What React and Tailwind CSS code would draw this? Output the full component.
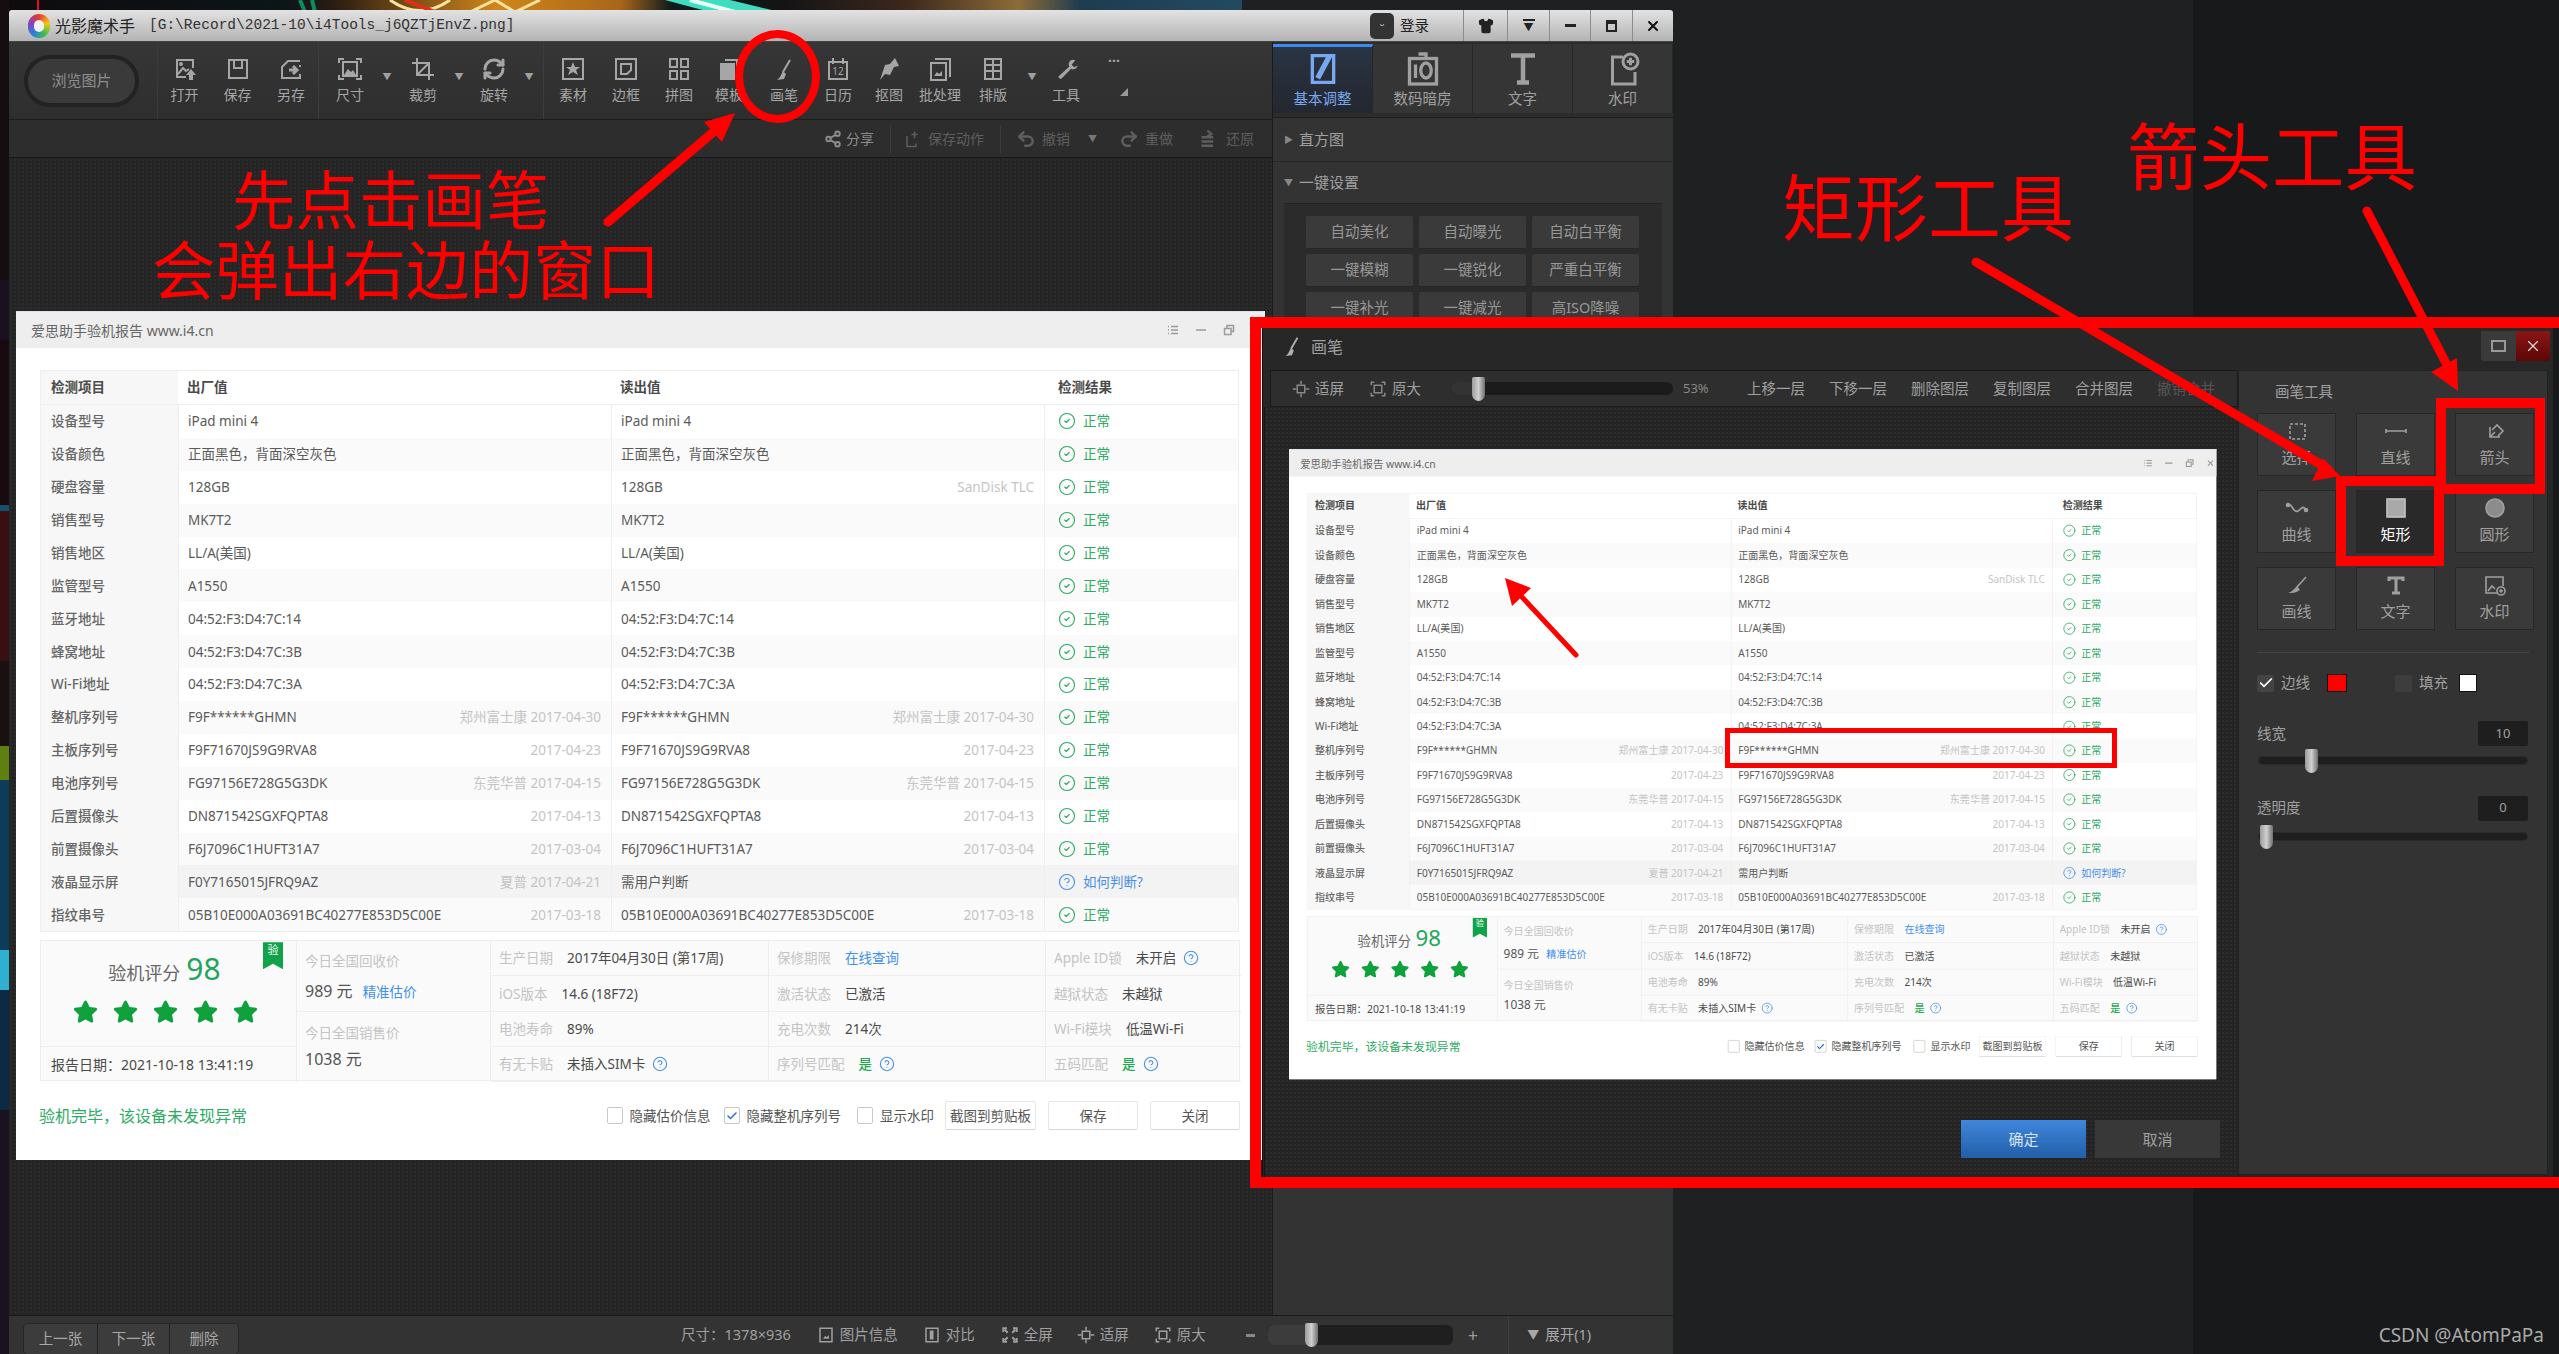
import React from 'react';
import { CircleCheck, CircleHelp, RefreshCw, Share2, Undo2, Redo2, Check, X, Shirt } from 'lucide-react';
import { FaStar } from 'react-icons/fa';

const Svg = ({ children, className = 'w-6 h-6', sw = 2 }) => (
  <svg viewBox="0 0 24 24" fill="none" stroke="currentColor" strokeWidth={sw} className={className}>{children}</svg>
);

const toolIcons = {
  open: <><path d="M20 11V3H4v17h9" /><path d="M5 17l5-6 3 3 3-2" /><circle cx="8" cy="7" r="1" fill="currentColor" /><path d="M18 12l5 6h-3v5h-4v-5h-3z" fill="currentColor" stroke="none" /></>,
  save: <><rect x="3" y="3" width="18" height="18" /><path d="M8 3v8h8V3" /></>,
  saveas: <><path d="M21 4H9L3 10v11h18v-4" /><path d="M21 8v2" /><path d="M10 13h7M14 9l4 4-4 4" strokeWidth="3" /></>,
  size: <><path d="M1 6V2h5M18 2h5v4M23 18v4h-5M6 22H1v-4" /><rect x="5" y="5" width="14" height="14" /><path d="M6 18l4-6 3 3 2-2 3 5z" fill="currentColor" stroke="none" /></>,
  crop: <><path d="M6 1v17h17" /><path d="M1 6h17v17" /><path d="M7 17L18 6" /></>,
  rotate: null,
  material: <><rect x="2" y="2" width="20" height="20" /><path d="M12 5l2 5h5l-4 3 2 5-5-3-5 3 2-5-4-3h5z" fill="currentColor" stroke="none" /></>,
  border: <><rect x="2" y="2" width="20" height="20" /><path d="M7 7h10v6l-4 4H7z" /></>,
  collage: <><rect x="3" y="2" width="7" height="8" /><rect x="14" y="2" width="7" height="8" /><rect x="3" y="14" width="7" height="8" /><rect x="14" y="14" width="7" height="8" /></>,
  template: <><path d="M8 3h12v15" /><rect x="4" y="7" width="13" height="15" fill="currentColor" /></>,
  brush: <><path d="M18 3l-7 12" /><path d="M11 14l3 3-2 5-7 1c3-2 4-5 6-9z" fill="currentColor" stroke="none" /></>,
  calendar: <><path d="M3 5h18v17H3zM7 1v6M17 1v6" /><text x="12" y="18" fontSize="10" textAnchor="middle" fill="currentColor" stroke="none">12</text></>,
  cutout: <path d="M18 1l4 8-5 1-4 8-5-1-5 6 3-9 2-6 5-1z" fill="currentColor" stroke="none" />,
  batch: <><path d="M7 2h15v18" /><rect x="3" y="6" width="15" height="17" /><path d="M6 19l3-4 2 2 3-3v5z" fill="currentColor" stroke="none" /></>,
  layout: <><rect x="4" y="2" width="16" height="20" /><path d="M4 8h16M4 14h16M12 2v20" /></>,
  wrench: <path d="M20 2c-3-1-6 1-6 4 0 1 0 2 1 3L6 20c-1 2 1 3 3 2l8-11c3 1 6-1 6-4l-3 2-3-2z" fill="currentColor" stroke="none" transform="rotate(8 12 12)" />,
};

const tools = [
  { t: '打开', i: 'open', w: 53 }, { t: '保存', i: 'save', w: 53 }, { t: '另存', i: 'saveas', w: 54, end: true },
  { t: '尺寸', i: 'size', w: 62, caret: true }, { t: '裁剪', i: 'crop', w: 60, caret: true }, { t: '旋转', i: 'rotate', w: 58, caret: true, pad: 8, end: true },
  { t: '素材', i: 'material', w: 58 }, { t: '边框', i: 'border', w: 48 }, { t: '拼图', i: 'collage', w: 58 }, { t: '模板', i: 'template', w: 42 },
  { t: '画笔', i: 'brush', w: 68 }, { t: '日历', i: 'calendar', w: 40 }, { t: '抠图', i: 'cutout', w: 62 }, { t: '批处理', i: 'batch', w: 40 },
  { t: '排版', i: 'layout', w: 66, caret: true }, { t: '工具', i: 'wrench', w: 56 },
];

function Toolbar() {
  return (
    <div className="h-[78px] flex bg-gradient-to-b from-[#363636] to-[#2e2e2e] border-b border-[#1c1c1c]">
      <div className="w-[149px] flex items-center pl-[15px] border-r border-[#3a3a3a]">
        <div className="w-[115px] h-[52px] rounded-[26px] border-[4px] border-[#222] bg-[#3a3a3a] flex items-center justify-center text-[#8f8f8f] text-[15px]">浏览图片</div>
      </div>
      {tools.map((x) => (
        <React.Fragment key={x.t}>
          <div className="flex flex-col items-center pt-[15px] text-[#a6a6a6] shrink-0" style={{ width: x.w }}>
            {x.i === 'rotate' ? <RefreshCw className="w-6 h-6" strokeWidth={3} /> : <Svg>{toolIcons[x.i]}</Svg>}
            <span className="text-[14px] leading-[20px] mt-[4px] whitespace-nowrap">{x.t}</span>
          </div>
          {x.caret && <div className="w-3 flex items-center pb-[8px] justify-center text-[#a0a0a0] text-[9px] shrink-0">▼</div>}
          {x.pad && <div className="w-2 shrink-0" />}
          {x.end && <div className="w-px bg-[#3d3d3d] shrink-0" />}
        </React.Fragment>
      ))}
      <div className="w-[40px] relative text-[#a6a6a6] text-center shrink-0 pt-[12px] font-bold text-[14px] leading-[14px]">
        ···
        <span className="absolute left-[26px] top-[46px] border-l-[8px] border-l-transparent border-b-[8px] border-b-[#999]" />
      </div>
    </div>
  );
}

function SubBar() {
  const dim = 'text-[14px] text-[#5e5e5e]';
  return (
    <div className="h-[38px] flex items-center justify-end pr-[18px] bg-[#2d2d2d] border-b border-[#1a1a1a]">
      <div className="flex items-center text-[14px] text-[#8c8c8c] pr-[16px] border-r border-[#3a3a3a] h-[28px]">
        <Share2 className="w-[18px] h-[18px] mr-[4px]" strokeWidth={2.5} /><span>分享</span>
      </div>
      <div className={`flex items-center ${dim} pl-[13px] pr-[16px] border-r border-[#3a3a3a] h-[28px]`}>
        <Svg className="w-[18px] h-[18px] mr-[6px]"><path d="M4 8v14h12V18M14 2v9M10 6h8" /></Svg><span>保存动作</span>
      </div>
      <div className={`flex items-center ${dim} pl-[15px]`}>
        <Undo2 className="w-5 h-5 mr-[6px]" strokeWidth={3} /><span>撤销</span>
        <span className="text-[9px] ml-[18px] mr-[22px] text-[#777]">▼</span>
        <Redo2 className="w-5 h-5 mr-[6px]" strokeWidth={3} /><span>重做</span>
        <Svg className="w-5 h-5 ml-[26px] mr-[7px]"><path d="M3 10h14M3 15h14M3 20h14" strokeWidth="3" /><path d="M10 2l5 4-5 3" strokeWidth="2.5" /></Svg><span>还原</span>
      </div>
    </div>
  );
}

const rows = [
  ['设备型号', 'iPad mini 4', '', 'iPad mini 4', ''],
  ['设备颜色', '正面黑色，背面深空灰色', '', '正面黑色，背面深空灰色', ''],
  ['硬盘容量', '128GB', '', '128GB', 'SanDisk TLC'],
  ['销售型号', 'MK7T2', '', 'MK7T2', ''],
  ['销售地区', 'LL/A(美国)', '', 'LL/A(美国)', ''],
  ['监管型号', 'A1550', '', 'A1550', ''],
  ['蓝牙地址', '04:52:F3:D4:7C:14', '', '04:52:F3:D4:7C:14', ''],
  ['蜂窝地址', '04:52:F3:D4:7C:3B', '', '04:52:F3:D4:7C:3B', ''],
  ['Wi-Fi地址', '04:52:F3:D4:7C:3A', '', '04:52:F3:D4:7C:3A', ''],
  ['整机序列号', 'F9F******GHMN', '郑州富士康 2017-04-30', 'F9F******GHMN', '郑州富士康 2017-04-30'],
  ['主板序列号', 'F9F71670JS9G9RVA8', '2017-04-23', 'F9F71670JS9G9RVA8', '2017-04-23'],
  ['电池序列号', 'FG97156E728G5G3DK', '东莞华普 2017-04-15', 'FG97156E728G5G3DK', '东莞华普 2017-04-15'],
  ['后置摄像头', 'DN871542SGXFQPTA8', '2017-04-13', 'DN871542SGXFQPTA8', '2017-04-13'],
  ['前置摄像头', 'F6J7096C1HUFT31A7', '2017-03-04', 'F6J7096C1HUFT31A7', '2017-03-04'],
  ['液晶显示屏', 'F0Y7165015JFRQ9AZ', '夏普 2017-04-21', '需用户判断', ''],
  ['指纹串号', '05B10E000A03691BC40277E853D5C00E', '2017-03-18', '05B10E000A03691BC40277E853D5C00E', '2017-03-18'],
];

const cols = 'grid grid-cols-[137px_433px_433px_196px]';

const Val = ({ v, s }) => (
  <div className="flex items-center justify-between pl-[9px] pr-[10px] border-l border-[#eeeeee] min-w-0">
    <span className="whitespace-nowrap">{v}</span>
    {s && <span className="text-[#c4c4c4] whitespace-nowrap">{s}</span>}
  </div>
);

const Info = ({ l, v, help, blue, green }) => (
  <div className="flex items-center pl-[8px] border-l border-b border-[#eeeeee] whitespace-nowrap">
    <span className="text-[#c4c4c4] mr-[14px]">{l}</span>
    {v && <span className={blue ? 'text-[#3f8ff0]' : green ? 'text-[#1faa50] font-medium' : 'text-[#4a4a4a]'}>{v}</span>}
    {help && <CircleHelp className="w-4 h-4 ml-[7px] text-[#4a90e8]" strokeWidth={1.6} />}
  </div>
);

const Check2 = ({ on, children }) => (
  <div className="flex items-center gap-[7px] text-[#555] whitespace-nowrap">
    <span className="w-[16px] h-[17px] border border-[#c8c8c8] rounded-[2px] bg-white flex items-center justify-center">
      {on && <Check className="w-3 h-3 text-[#2a6fd6]" strokeWidth={3} />}
    </span>
    {children}
  </div>
);

const Btn = ({ children, w = 'w-[90px]' }) => (
  <div className={`${w} h-[29px] border border-[#e6e6e6] border-b-[#d5d5d5] rounded-[2px] bg-white flex items-center justify-center text-[#555]`}>{children}</div>
);

function Report({ className }) {
  return (
    <div className={`w-[1249px] h-[849px] bg-white text-[13.5px] text-[#5a5a5a] ${className}`}>
      <div className="h-[37px] bg-[#eeeeee] border-t border-[#d7e3ee] flex items-center pl-[15px] text-[14px] text-[#666]">
        <span>爱思助手验机报告 www.i4.cn</span>
        <div className="ml-auto flex items-center gap-[16px] pr-[2px] text-[#9a9a9a]">
          <Svg className="w-3 h-3"><path d="M8 5h14M8 12h14M8 19h14M2 5h2M2 12h2M2 19h2" strokeWidth="3" /></Svg>
          <Svg className="w-3 h-3"><path d="M2 12h20" strokeWidth="3" /></Svg>
          <Svg className="w-3 h-3" sw="3"><path d="M8 8V3h13v12h-5" /><rect x="3" y="9" width="13" height="12" /></Svg>
          <X className="w-3 h-3" strokeWidth={3} />
        </div>
      </div>
      <div className="mt-[22px] mx-[24px] w-[1199px] border border-[#eeeeee]">
        <div className={`${cols} h-[34px] font-bold text-[#4a4a4a] border-b border-[#eeeeee]`}>
          <div className="bg-[#f7f7f7] pl-[10px] flex items-center">检测项目</div>
          <div className="pl-[9px] flex items-center">出厂值</div>
          <div className="pl-[9px] flex items-center">读出值</div>
          <div className="pl-[14px] flex items-center">检测结果</div>
        </div>
        {rows.map((r, i) => {
          const how = r[0] === '液晶显示屏';
          return (
            <div key={r[0]} className={`${cols} h-[32.9px] ${how ? 'bg-[#f3f3f3]' : i % 2 ? 'bg-[#fafafa]' : 'bg-white'}`}>
              <div className="bg-[#f7f7f7] pl-[10px] flex items-center font-medium text-[#666]">{r[0]}</div>
              <Val v={r[1]} s={r[2]} />
              <Val v={r[3]} s={r[4]} />
              <div className={`flex items-center pl-[13px] border-l border-[#eeeeee] gap-[7px] ${how ? 'text-[#4a90e8]' : 'text-[#2cab62]'}`}>
                {how ? <CircleHelp className="w-[18px] h-[18px]" strokeWidth={1.5} /> : <CircleCheck className="w-[18px] h-[18px]" strokeWidth={1.5} />}
                <span>{how ? '如何判断?' : '正常'}</span>
              </div>
            </div>
          );
        })}
      </div>
      <div className="mt-[8px] mx-[24px] w-[1200px] h-[141px] border border-[#eeeeee] bg-[#fafafa] grid grid-cols-[255px_194px_278px_277px_196px] grid-rows-[35px_36px_35px_35px]">
        <div className="row-span-3 relative border-b border-[#eeeeee] flex flex-col items-center">
          <div className="flex items-baseline gap-[6px] mt-[9px] mr-[8px] text-[18px] text-[#666]">验机评分<span className="text-[30px] leading-[38px] text-[#22a55a]">98</span></div>
          <div className="flex gap-[15px] mt-[11px] mr-[6px] text-[#0ea13c]">
            {[1, 2, 3, 4, 5].map((n) => <FaStar key={n} className="w-[25px] h-[25px]" />)}
          </div>
          <div className="absolute right-[13px] top-[1px] w-[20px] h-[27px] bg-[#10a34a] text-white text-[11px] text-center [clip-path:polygon(0_0,100%_0,100%_100%,50%_80%,0_100%)]">验</div>
        </div>
        <div className="row-span-2 border-l border-b border-[#eeeeee] pl-[8px] pt-[10px]">
          <div className="text-[#c4c4c4]">今日全国回收价</div>
          <div className="mt-[7px] text-[16px] text-[#555]">989 元<span className="ml-[10px] text-[13.5px] text-[#3f8ff0]">精准估价</span></div>
        </div>
        <Info l="生产日期" v="2017年04月30日 (第17周)" />
        <Info l="保修期限" v="在线查询" blue />
        <Info l="Apple ID锁" v="未开启" help />
        <Info l="iOS版本" v="14.6 (18F72)" />
        <Info l="激活状态" v="已激活" />
        <Info l="越狱状态" v="未越狱" />
        <div className="row-span-2 border-l border-[#eeeeee] pl-[8px] pt-[11px]">
          <div className="text-[#c4c4c4]">今日全国销售价</div>
          <div className="mt-[3px] text-[16px] text-[#555]">1038 元</div>
        </div>
        <Info l="电池寿命" v="89%" />
        <Info l="充电次数" v="214次" />
        <Info l="Wi-Fi模块" v="低温Wi-Fi" />
        <div className="flex items-center pl-[10px] text-[14px] text-[#4a4a4a] whitespace-nowrap">报告日期：2021-10-18 13:41:19</div>
        <Info l="有无卡贴" v="未插入SIM卡" help />
        <Info l="序列号匹配" v="是" green help />
        <Info l="五码匹配" v="是" green help />
      </div>
      <div className="mt-[20px] mx-[23px] w-[1201px] flex items-center">
        <span className="text-[16px] text-[#2cab62]">验机完毕，该设备未发现异常</span>
        <div className="ml-auto flex items-center">
          <Check2>隐藏估价信息</Check2>
          <div className="w-[13px]" />
          <Check2 on>隐藏整机序列号</Check2>
          <div className="w-[16px]" />
          <Check2>显示水印</Check2>
          <div className="w-[11px]" />
          <Btn w="w-[91px]">截图到剪贴板</Btn>
          <div className="w-[12px]" />
          <Btn>保存</Btn>
          <div className="w-[12px]" />
          <Btn>关闭</Btn>
        </div>
      </div>
    </div>
  );
}

const Tab = ({ t, on, children }) => (
  <div className={`flex-1 flex flex-col items-center border-r border-[#262626] ${on ? 'pt-[4px] border-t-[3px] border-t-[#3d8bf0] bg-gradient-to-b from-[#2a3444] to-[#23272f] text-[#78a8f0]' : 'pt-[7px] bg-[#353535] text-[#a0a0a0]'}`}>
    <div className="h-[36px] flex items-center">{children}</div>
    <span className="text-[14.5px] leading-[20px] mt-[1px]">{t}</span>
  </div>
);

const presetRows = [['自动美化', '自动曝光', '自动白平衡'], ['一键模糊', '一键锐化', '严重白平衡'], ['一键补光', '一键减光', '高ISO降噪']];

function SidePanel() {
  return (
    <div className="w-[401px] shrink-0 flex flex-col bg-[#333333] border-l border-[#1a1a1a]">
      <div className="h-[76px] flex bg-[#2c2c2c] border-b border-[#1e1e1e] pt-[2px] pb-[4px]">
        <Tab t="基本调整" on>
          <Svg className="w-8 h-9" sw="2.5"><path d="M4 2h16v20H4z" /><path d="M17 2l-9 17" strokeWidth="4" /></Svg>
        </Tab>
        <Tab t="数码暗房">
          <Svg className="w-9 h-9" sw="2.2"><rect x="3" y="5" width="18" height="17" /><path d="M9 2h5v3" /><path d="M7 9v9" /><ellipse cx="14" cy="13" rx="3.5" ry="5" /></Svg>
        </Tab>
        <Tab t="文字">
          <Svg className="w-9 h-9" sw="3"><path d="M4 3h16M12 3v18M8 21h8" /></Svg>
        </Tab>
        <Tab t="水印">
          <Svg className="w-9 h-9" sw="2"><path d="M12 4H5v18h15v-8" /><circle cx="17" cy="7" r="5" /><path d="M17 4.5v5M14.5 7h5" /></Svg>
        </Tab>
      </div>
      <div className="h-[44px] flex items-center pl-[11px] text-[15px] text-[#a0a0a0] border-b border-[#262626]">
        <span className="text-[9px] mr-[6px] text-[#888]">▶</span>直方图
      </div>
      <div className="h-[41px] flex items-center pl-[11px] text-[15px] text-[#a0a0a0]">
        <span className="text-[9px] mr-[6px] text-[#888]">▼</span>一键设置
      </div>
      <div className="mx-[11px] w-[378px] bg-[#2b2b2b] border-t border-[#222] pt-[12px] px-[22px] pb-[6px] flex flex-col gap-[5px]">
        {presetRows.map((r) => (
          <div key={r[0]} className="flex gap-[6px]">
            {r.map((t) => (
              <div key={t} className="w-[107px] h-[33px] bg-[#3a3a3a] rounded-[2px] border-b border-[#262626] flex items-center justify-center text-[14.5px] text-[#989898]">{t}</div>
            ))}
          </div>
        ))}
      </div>
    </div>
  );
}

const Thumb = ({ className = '' }) => (
  <span className={`absolute top-1/2 -translate-y-1/2 w-[13px] h-[24px] rounded-b-[7px] rounded-t-[2px] bg-gradient-to-r from-[#9c9c9c] via-[#d0d0d0] to-[#707070] ${className}`} />
);

function BottomBar() {
  const it = 'flex items-center gap-[5px] text-[14.5px] text-[#a0a0a0] whitespace-nowrap';
  return (
    <div className="h-[39px] flex items-center bg-[#333333] border-t border-[#1a1a1a] pl-[14px]">
      <div className="flex h-[32px] mt-[7px] rounded-[5px] bg-[#3c3c3c] border border-[#252525] text-[14.5px] text-[#a8a8a8] divide-x divide-[#222]">
        <span className="w-[74px] flex items-center justify-center">上一张</span>
        <span className="w-[72px] flex items-center justify-center">下一张</span>
        <span className="w-[68px] flex items-center justify-center">删除</span>
      </div>
      <span className={`${it} ml-[442px]`}>尺寸：1378×936</span>
      <span className={`${it} ml-[26px]`}><Svg className="w-[18px] h-[18px]"><rect x="4" y="3" width="16" height="18" /><path d="M8 17l3-4 2 2 3-3v5z" fill="currentColor" stroke="none" /></Svg>图片信息</span>
      <span className={`${it} ml-[25px]`}><Svg className="w-[18px] h-[18px]"><rect x="4" y="3" width="16" height="18" /><rect x="9" y="6" width="5" height="12" fill="currentColor" stroke="none" /></Svg>对比</span>
      <span className={`${it} ml-[26px]`}><Svg className="w-[18px] h-[18px]" sw="2.5"><path d="M3 8V3h5M16 3h5v5M21 16v5h-5M8 21H3v-5M9 9l-4-4M15 9l4-4M9 15l-4 4M15 15l4 4" /></Svg>全屏</span>
      <span className={`${it} ml-[24px]`}><Svg className="w-[18px] h-[18px]"><rect x="7" y="7" width="10" height="10" /><path d="M12 1v5M12 18v5M1 12h5M18 12h5" /></Svg>适屏</span>
      <span className={`${it} ml-[25px]`}><Svg className="w-[18px] h-[18px]"><path d="M3 7V3h4M17 3h4v4M21 17v4h-4M7 21H3v-4" /><rect x="7" y="7" width="10" height="10" /></Svg>原大</span>
      <span className="ml-[40px] w-[9px] h-[3px] bg-[#888]" />
      <div className="relative ml-[13px] w-[185px] h-[20px] rounded-[6px] bg-[#1f1f1f] shrink-0">
        <div className="w-[40px] h-full rounded-l-[6px] bg-[#3c3c3c]" />
        <Thumb className="left-[37px]" />
      </div>
      <span className="ml-[15px] text-[18px] leading-none text-[#999]">+</span>
      <div className="ml-[30px] h-full border-l border-[#3f3f3f] pl-[18px] w-[117px] flex items-center gap-[6px] text-[14.5px] text-[#a8a8a8]">
        <span className="text-[12px]">▼</span>展开(1)
      </div>
    </div>
  );
}

const canvasBg = 'bg-[#242424] bg-[radial-gradient(#2c2c2c_1px,transparent_1px)] bg-[length:4px_4px]';

const paintTools = [
  { t: '选择', i: <rect x="5" y="3" width="15" height="15" strokeDasharray="3 2" /> },
  { t: '直线', i: <path d="M2 10h20M2 8v4M22 8v4" /> },
  { t: '箭头', i: <><path d="M7 6v10h10M7 16l5-5M9 9l5-5 6 6-5 5" /></> },
  { t: '曲线', i: <><path d="M3 7c4-3 5 9 10 6s4-6 8-1" /><circle cx="3" cy="7" r="1.5" fill="currentColor" /><circle cx="21" cy="12" r="1.5" fill="currentColor" /></> },
  { t: '矩形', on: true, i: <rect x="3" y="1" width="18" height="18" fill="#a9a9a9" stroke="#c4c4c4" /> },
  { t: '圆形', i: <circle cx="12" cy="10" r="9" fill="#8c8c8c" stroke="#a0a0a0" /> },
  { t: '画线', i: <><path d="M21 2L12 12" /><path d="M12 11l3 4c-4 3-8 3-12 3 4-1 6-4 9-7z" fill="currentColor" stroke="none" /></> },
  { t: '文字', i: <path d="M5 6V3h14v3M12 3v15M8 18h8" strokeWidth="3" /> },
  { t: '水印', i: <><path d="M20 11V2H3v16h11" /><path d="M5 16l4-5 3 3" /><circle cx="18" cy="16" r="4" /><circle cx="18" cy="16" r="1" fill="currentColor" /></> },
];

const Slider = ({ left }) => (
  <div className="relative mx-[1px] h-[9px] rounded-[5px] bg-[#1e1e1e] border border-[#2a2a2a]">
    <Thumb className={left} />
  </div>
);

function PaintDialog() {
  const layer = 'whitespace-nowrap text-[14.5px] text-[#a0a0a0]';
  return (
    <div className="absolute left-[1262px] top-[327px] w-[1291px] h-[850px] bg-[#262626] border-t border-l border-[#111] flex flex-col">
      <div className="h-[42px] shrink-0 flex items-start pl-[18px] pt-[7px] text-[16px] text-[#a0a0a0] bg-[#272727] relative">
        <Svg className="w-[22px] h-[22px] text-[#b0b0b0]">{toolIcons.brush}</Svg>
        <span className="ml-[8px]">画笔</span>
        <div className="absolute right-[3px] top-[3px] flex">
          <div className="w-[35px] h-[30px] bg-[#3a3a3a] rounded-bl-[3px] flex items-center justify-center">
            <span className="w-[15px] h-[12px] border-[2px] border-[#999]" />
          </div>
          <div className="w-[34px] h-[30px] bg-gradient-to-b from-[#8c1515] to-[#5c0808] rounded-br-[3px] flex items-center justify-center text-[#e5e5e5]">
            <X className="w-[18px] h-[18px]" strokeWidth={1.5} />
          </div>
        </div>
      </div>
      <div className="flex-1 flex min-h-0">
        <div className="w-[975px] shrink-0 flex flex-col relative">
          <div className="h-[37px] ml-[7px] bg-[#2e2e2e] border border-[#1a1a1a] flex items-center text-[14.5px] text-[#a0a0a0] pl-[21px]">
            <span className="flex items-center gap-[5px] whitespace-nowrap"><Svg className="w-[18px] h-[18px] text-[#888]"><rect x="7" y="7" width="10" height="10" /><path d="M12 1v5M12 18v5M1 12h5M18 12h5" /></Svg>适屏</span>
            <span className="flex items-center gap-[5px] ml-[25px] whitespace-nowrap"><Svg className="w-[18px] h-[18px] text-[#888]"><path d="M3 7V3h4M17 3h4v4M21 17v4h-4M7 21H3v-4" /><rect x="7" y="7" width="10" height="10" /></Svg>原大</span>
            <div className="relative ml-[30px] w-[222px] h-[13px] rounded-[7px] bg-[#1b1b1b] shrink-0">
              <div className="w-[28px] h-full rounded-l-[7px] bg-[#333]" />
              <Thumb className="left-[21px]" />
            </div>
            <span className="ml-[10px] w-[64px] text-[13px] text-[#888]">53%</span>
            <span className={layer}>上移一层</span>
            <span className={`${layer} ml-[24px]`}>下移一层</span>
            <span className={`${layer} ml-[24px]`}>删除图层</span>
            <span className={`${layer} ml-[24px]`}>复制图层</span>
            <span className={`${layer} ml-[24px]`}>合并图层</span>
            <span className="ml-[24px] whitespace-nowrap text-[14.5px] text-[#555]">撤销合并</span>
          </div>
          <div className={`flex-1 ml-[1px] relative ${canvasBg} border-l border-[#151515]`}>
            <Report className="absolute left-[24px] top-[42px] origin-top-left scale-[0.7425]" />
            <div className="absolute left-[696px] top-[713px] flex gap-[9px] text-[15px]">
              <div className="w-[125px] h-[38px] bg-gradient-to-b from-[#3f87dd] to-[#225ea8] flex items-center justify-center text-[#d8e4f2]">确定</div>
              <div className="w-[125px] h-[38px] bg-[#383838] flex items-center justify-center text-[#a0a0a0]">取消</div>
            </div>
          </div>
        </div>
        <div className="w-[310px] mb-[2px] bg-[#333333] border border-[#222] px-[18px] text-[14.5px] text-[#a0a0a0]">
          <div className="h-[42px] flex items-center pl-[18px]">画笔工具</div>
          <div className="grid grid-cols-[79px_79px_79px] gap-x-[20px] gap-y-[14px]">
            {paintTools.map((x) => (
              <div key={x.t} className={`h-[63px] flex flex-col items-center pt-[7px] border border-[#272727] ${x.on ? 'bg-[#292929] text-white' : 'bg-[#3a3a3a]'}`}>
                <span className={x.on ? 'text-[#c4c4c4]' : 'text-[#a0a0a0]'}><Svg className="w-6 h-6" sw="1.6">{x.i}</Svg></span>
                <span className="text-[15px] leading-[20px] mt-[2px]">{x.t}</span>
              </div>
            ))}
          </div>
          <div className="mt-[22px] h-px bg-[#444]" />
          <div className="mt-[20px] h-[20px] flex items-center">
            <span className="w-[17px] h-[17px] bg-[#444] rounded-[2px] flex items-center justify-center text-white"><Check className="w-4 h-4" strokeWidth={2.5} /></span>
            <span className="ml-[7px] w-[46px]">边线</span>
            <span className="w-[20px] h-[18px] bg-[#ff0000] border border-[#111]" />
            <span className="ml-[48px] w-[17px] h-[17px] bg-[#3d3d3d] rounded-[2px]" />
            <span className="ml-[7px] w-[40px]">填充</span>
            <span className="w-[18px] h-[18px] bg-white border border-[#111]" />
          </div>
          <div className="mt-[28px] h-[25px] flex items-center justify-between">
            <span>线宽</span>
            <span className="w-[50px] h-[25px] mr-[1px] bg-[#1e1e1e] rounded-[2px] flex items-center justify-center text-[13px]">10</span>
          </div>
          <div className="mt-[10px]"><Slider left="left-[46px]" /></div>
          <div className="mt-[30px] h-[26px] flex items-center justify-between">
            <span>透明度</span>
            <span className="w-[50px] h-[25px] mr-[1px] bg-[#1e1e1e] rounded-[2px] flex items-center justify-center text-[13px]">0</span>
          </div>
          <div className="mt-[11px]"><Slider left="left-[1px]" /></div>
        </div>
      </div>
    </div>
  );
}

function Annotations() {
  const big = 'absolute leading-none text-[#ff0000] whitespace-nowrap';
  return (
    <>
      <div className="absolute left-[735px] top-[30px] w-[85px] h-[93px] rounded-[50%] border-[8px] border-[#ff0000]" />
      <div className={`${big} left-[232px] top-[168px] text-[63.5px]`}>先点击画笔</div>
      <div className={`${big} left-[152px] top-[238px] text-[63.5px]`}>会弹出右边的窗口</div>
      <div className={`${big} left-[1782px] top-[170px] text-[73px]`}>矩形工具</div>
      <div className={`${big} left-[2127px] top-[120px] text-[72.5px]`}>箭头工具</div>
      <div className="absolute left-[1250px] top-[317px] w-[1320px] h-[871px] border-[11px] border-[#ff0000]" />
      <div className="absolute left-[1725px] top-[728px] w-[392px] h-[40px] border-[5px] border-[#ff0000]" />
      <div className="absolute left-[2436px] top-[398px] w-[109px] h-[96px] border-[10px] border-[#ff0000]" />
      <div className="absolute left-[2336px] top-[476px] w-[108px] h-[90px] border-[10px] border-[#ff0000]" />
      <svg className="absolute inset-0 w-[2559px] h-[1354px] pointer-events-none" viewBox="0 0 2559 1354">
        <g stroke="#ff0000" strokeLinecap="round" fill="#ff0000">
          <path d="M608 222L718 128" strokeWidth="9" />
          <polygon points="735,113 704,122 722,142" stroke="none" />
          <path d="M1976 262L2325 467" strokeWidth="9" />
          <polygon points="2340,476 2323,458 2312,481" stroke="none" />
          <path d="M2367 211L2447 365" strokeWidth="9" />
          <polygon points="2458,391 2457,358 2431,372" stroke="none" />
          <path d="M1576 655L1521 596" strokeWidth="5" />
          <polygon points="1505,578 1531,588 1512,606" stroke="none" />
        </g>
      </svg>
    </>
  );
}

function Wallpaper() {
  return (
    <>
      <div className="absolute right-0 top-0 w-[366px] h-full bg-[#18191b]" />
      <svg className="absolute left-0 top-0 w-[1242px] h-[12px]" viewBox="0 0 1242 12" preserveAspectRatio="none">
        <defs>
          <linearGradient id="wall" x1="0" x2="1" y1="0" y2="0">
            <stop offset="0" stopColor="#0f0b0d" />
            <stop offset="0.23" stopColor="#0b1518" />
            <stop offset="0.27" stopColor="#2a1d12" />
            <stop offset="0.4" stopColor="#d0861a" />
            <stop offset="0.5" stopColor="#a8661a" />
            <stop offset="0.54" stopColor="#101c1c" />
            <stop offset="0.63" stopColor="#141414" />
            <stop offset="0.73" stopColor="#3c281c" />
            <stop offset="0.82" stopColor="#8c6c38" />
            <stop offset="0.87" stopColor="#1e3c50" />
            <stop offset="1" stopColor="#234a60" />
          </linearGradient>
        </defs>
        <rect width="1242" height="12" fill="url(#wall)" />
        <path d="M38 0v12" stroke="#e01020" strokeWidth="2" />
        <path d="M300 0l5 12M312 0l3 12" stroke="#0fa" strokeWidth="4" opacity="0.5" />
        <path d="M390 0c20 14 40 14 60 0M470 12l25-12 20 12 25-12" stroke="#fde2a0" strokeWidth="3" fill="none" />
        <path d="M405 0l30 12" stroke="#e23018" strokeWidth="4" />
        <path d="M665 0l45 12h70L730 0z" fill="#3fdcc0" />
        <path d="M690 0l45 12" stroke="#e8fff8" strokeWidth="4" />
      </svg>
      <div className="absolute left-0 top-0 w-[9px] h-full flex flex-col">
        <div className="h-[280px] bg-[#160d10]" />
        <div className="h-[60px] bg-[#1a1020]" />
        <div className="h-[165px] bg-[#180a0e]" />
        <div className="h-[6px] bg-[#14506e]" />
        <div className="h-[150px] bg-[#3a0f12]" />
        <div className="h-[85px] bg-[#1b1010]" />
        <div className="h-[34px] bg-[#5f7f12]" />
        <div className="h-[170px] bg-[#0c3c58]" />
        <div className="h-[40px] bg-[#2fb0d0]" />
        <div className="h-[120px] bg-[#0c2a44]" />
        <div className="flex-1 bg-[#1a1220]" />
      </div>
    </>
  );
}

export default function App() {
  return (
    <div className="relative w-[2559px] h-[1354px] overflow-hidden bg-[#1e2022] font-['Noto_Sans','Noto_Sans_CJK_SC',sans-serif]">
      <Wallpaper />
      {/* main window */}
      <div className="absolute left-[9px] top-[10px] w-[1664px] h-[1344px] flex flex-col">
        <div className="h-[32px] shrink-0 flex items-center bg-gradient-to-b from-[#e2e2e2] to-[#b4b4b4] border-b border-[#444] rounded-t-[3px]">
          <div className="ml-[19px] w-[22px] h-[24px] rounded-full flex items-center justify-center bg-[conic-gradient(#e53b2c,#f5c518,#3fbf4a,#2a7fe0,#8a3fc0,#e53b2c)]">
            <span className="w-[10px] h-[12px] rounded-full bg-[#f2f2f2]" />
          </div>
          <span className="ml-[5px] text-[16px] text-[#222] whitespace-nowrap">光影魔术手</span>
          <span className="ml-[14px] font-['Liberation_Mono','Noto_Sans_CJK_SC',monospace] text-[14.5px] text-[#333] whitespace-nowrap">[G:\Record\2021-10\i4Tools_j6QZTjEnvZ.png]</span>
          <div className="ml-auto flex items-center h-full">
            <span className="w-[24px] h-[26px] rounded-[5px] bg-[#333] flex items-center justify-center text-[#ccc] text-[11px]">ᵕ</span>
            <span className="ml-[6px] w-[63px] text-[14.5px] text-[#222]">登录</span>
            <span className="w-[44px] h-full border-l border-[#8c8c8c] flex items-center justify-center"><Shirt className="w-4 h-4 text-[#222] fill-[#222]" /></span>
            <span className="w-[42px] h-full border-l border-[#8c8c8c] flex flex-col items-center justify-center text-[10px] leading-[9px] text-[#222]"><span className="w-[12px] h-[2px] bg-[#222] mb-[2px]" />▼</span>
            <span className="w-[41px] h-full border-l border-[#8c8c8c] flex items-center justify-center"><span className="w-[11px] h-[3px] bg-[#222]" /></span>
            <span className="w-[42px] h-full border-l border-[#8c8c8c] flex items-center justify-center"><span className="w-[11px] h-[12px] border-[2px] border-t-[4px] border-[#222]" /></span>
            <span className="w-[41px] h-full border-l border-[#8c8c8c] flex items-center justify-center"><X className="w-4 h-4 text-[#111]" strokeWidth={3} /></span>
          </div>
        </div>
        <div className="flex-1 flex min-h-0">
          <div className="w-[1263px] shrink-0 flex flex-col">
            <Toolbar />
            <SubBar />
            <div className={`flex-1 relative ${canvasBg}`}>
              <Report className="absolute left-[7px] top-[153px]" />
            </div>
          </div>
          <SidePanel />
        </div>
        <BottomBar />
      </div>
      <PaintDialog />
      <Annotations />
      <div className="absolute right-[15px] top-[1322px] text-[19px] leading-[26px] text-[#aaaaaa]">CSDN @AtomPaPa</div>
    </div>
  );
}
